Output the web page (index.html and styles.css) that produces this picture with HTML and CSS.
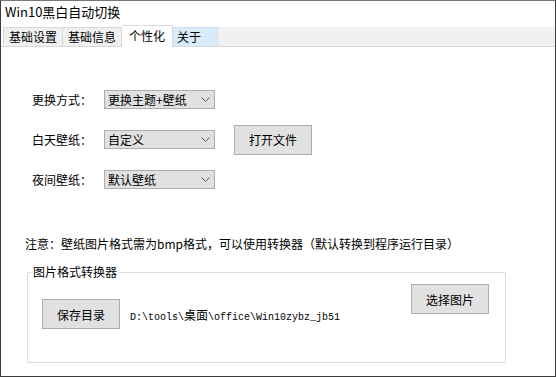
FILE: index.html
```html
<!DOCTYPE html>
<html lang="zh-CN">
<head>
    <meta charset="UTF-8">
    <title>Win10黑白自动切换</title>
    <link rel="stylesheet" href="styles.css">
</head>
<body>
    <div class="window">
        <div class="titlebar">Win10黑白自动切换</div>

        <!-- 选项卡 -->
        <div class="tabs">
            <div class="tab">基础设置</div>
            <div class="tab">基础信息</div>
            <div class="tab active">个性化</div>
            <div class="tab hover">关于</div>
            <div class="tab-fill"></div>
        </div>

        <div class="panel">
            <div class="form">
                <div class="row">
                    <span class="label">更换方式：</span>
                    <div class="select"><span>更换主题+壁纸</span><svg width="9" height="5" viewBox="0 0 9 5"><polyline points="0.5,0.5 4.5,4.5 8.5,0.5" fill="none" stroke="#555" stroke-width="1"/></svg></div>
                </div>
                <div class="row">
                    <span class="label">白天壁纸：</span>
                    <div class="select"><span>自定义</span><svg width="9" height="5" viewBox="0 0 9 5"><polyline points="0.5,0.5 4.5,4.5 8.5,0.5" fill="none" stroke="#555" stroke-width="1"/></svg></div>
                    <button class="btn btn-open">打开文件</button>
                </div>
                <div class="row">
                    <span class="label">夜间壁纸：</span>
                    <div class="select"><span>默认壁纸</span><svg width="9" height="5" viewBox="0 0 9 5"><polyline points="0.5,0.5 4.5,4.5 8.5,0.5" fill="none" stroke="#555" stroke-width="1"/></svg></div>
                </div>
            </div>

            <div class="note">注意：壁纸图片格式需为bmp格式，可以使用转换器（默认转换到程序运行目录）</div>

            <!-- 图片格式转换器 -->
            <fieldset class="group">
                <legend>图片格式转换器</legend>
                <div class="conv">
                    <div class="conv-left">
                        <button class="btn">保存目录</button>
                        <span class="path">D:\tools\<span class="cjk">桌面</span>\office\Win10zybz_jb51</span>
                    </div>
                    <button class="btn conv-right">选择图片</button>
                </div>
            </fieldset>
        </div>
    </div>
</body>
</html>
```

FILE: styles.css
```css
body {
    margin: 0;
    font-family: "Noto Sans CJK SC", "Liberation Sans", sans-serif;
    font-size: 12px;
    color: #000;
    background: #fff;
}
.window {
    width: 556px;
    height: 377px;
    box-sizing: border-box;
    border: 1px solid #3c3c3c;
    border-top-color: #777;
    display: flex;
    flex-direction: column;
    background: #fff;
}
.titlebar {
    height: 24px;
    line-height: 22px;
    padding-left: 4px;
    font-size: 13px;
}
.tabs {
    display: flex;
    align-items: flex-end;
    height: 21px;
    padding-left: 2px;
    border-bottom: 1px solid #d9d9d9;
}
.tab {
    height: 19px;
    box-sizing: border-box;
    line-height: 17px;
    padding: 0 5px;
    background: #f0f0f0;
    border-top: 1px solid #d9d9d9;
    border-right: 1px solid #d9d9d9;
}
.tab:first-child {
    border-left: 1px solid #d9d9d9;
}
.tab.active {
    height: 22px;
    margin-bottom: -1px;
    line-height: 19px;
    padding: 0 7px;
    background: #fff;
}
.tab.hover {
    width: 45px;
    padding: 0 4px;
    background: #d9eaf9;
    border-color: #cde0f2;
}
.tab-fill {
    flex: 1;
    height: 19px;
    background: #f0f0f0;
}
.panel {
    flex: 1;
}
.form {
    margin: 43px 0 0 31px;
}
.row {
    display: flex;
    align-items: center;
    height: 19px;
    margin-bottom: 21px;
}
.row:last-child {
    margin-bottom: 0;
}
.label {
    width: 72px;
}
.select {
    width: 111px;
    height: 19px;
    box-sizing: border-box;
    display: flex;
    align-items: center;
    justify-content: space-between;
    padding: 0 4px 0 3px;
    background: #e1e1e1;
    border: 1px solid #adadad;
    line-height: 17px;
}
.btn {
    width: 78px;
    height: 30px;
    padding: 0;
    font-family: inherit;
    font-size: 12px;
    color: #000;
    background: #e1e1e1;
    border: 1px solid #adadad;
}
.btn-open {
    margin-left: 19px;
    flex-shrink: 0;
}
.note {
    margin: 47px 0 0 24px;
    line-height: 16px;
}
.group {
    width: 479px;
    height: 99px;
    box-sizing: border-box;
    margin: 12px 0 0 26px;
    padding: 0;
    border: 1px solid #dcdcdc;
}
.group legend {
    margin-left: 3px;
    padding: 0 2px;
    line-height: 16px;
}
.conv {
    display: flex;
    align-items: flex-start;
}
.conv-left {
    display: flex;
    align-items: center;
    margin: 19px 0 0 14px;
}
.path {
    margin-left: 10px;
    font-family: "Liberation Mono", monospace;
    font-size: 10px;
}
.path .cjk {
    font-family: "Noto Sans CJK SC", sans-serif;
    font-size: 12px;
}
.conv-right {
    margin: 4px 16px 0 auto;
}
```
